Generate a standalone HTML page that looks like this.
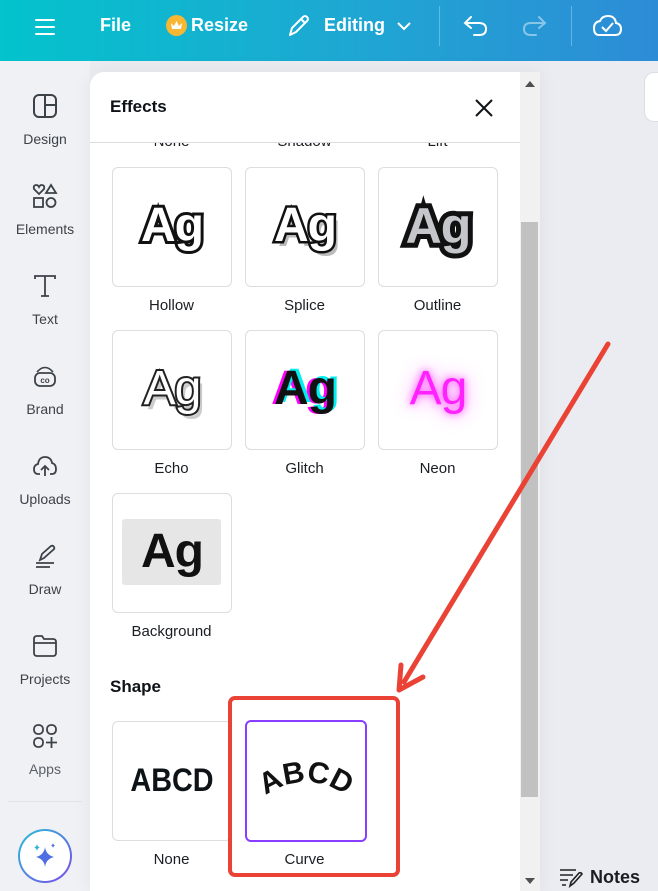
<!DOCTYPE html>
<html><head><meta charset="utf-8"><style>
*{margin:0;padding:0;box-sizing:border-box}
body{width:658px;height:891px;overflow:hidden;background:#ebecf1;font-family:"Liberation Sans",sans-serif;position:relative;color:#0e1318}
.top{position:absolute;left:0;top:0;width:658px;height:61px;background:linear-gradient(90deg,#03c3cc,#1fa6d3 55%,#2d8cd6)}
.tw{position:absolute;color:#fff;font-weight:bold;font-size:18px;top:15px}
.side{position:absolute;left:0;top:61px;width:90px;height:830px;background:#f0f1f5}
.si{position:absolute;left:0;width:90px;text-align:center;font-size:14px;color:#3c4249}
.si svg{display:block;margin:0 auto 12px}
.panel{position:absolute;left:90px;top:72px;width:450px;height:819px;background:#fff;border-radius:14px 0 0 0;overflow:hidden;box-shadow:0 0 20px rgba(0,0,0,.06)}
.card{position:absolute;width:120px;height:120px;border:1.5px solid #dcdde1;border-radius:6px;background:#fff;overflow:hidden}
.lab{position:absolute;width:133px;text-align:center;font-size:15px;color:#1a1d22}
.ag{position:absolute;left:0;top:0;width:100%;height:100%;text-align:center;line-height:116px;font-size:48px;font-family:"Liberation Sans",sans-serif;font-weight:bold;letter-spacing:-1px}
</style></head><body>
<div class="top">
 <svg style="position:absolute;left:34px;top:17px" width="22" height="20"><path d="M2 3H20M2 10H20M2 17H20" stroke="#fff" stroke-width="2" stroke-linecap="round"/></svg>
 <div class="tw" style="left:100px">File</div>
 <div style="position:absolute;left:166px;top:15px;width:21px;height:21px;border-radius:50%;background:#f7b733"></div>
 <svg style="position:absolute;left:169px;top:19px" width="15" height="13"><path d="M2 4L5 7L7.5 2L10 7L13 4L12 10H3Z" fill="#fff"/></svg>
 <div class="tw" style="left:191px">Resize</div>
 <svg style="position:absolute;left:286px;top:13px" width="26" height="26"><path d="M4 22L6 15L17 4Q19 2 21 4Q23 6 21 8L10 19Z M15 6L19 10" stroke="#fff" stroke-width="2" fill="none" stroke-linejoin="round"/></svg>
 <div class="tw" style="left:324px">Editing</div>
 <svg style="position:absolute;left:396px;top:20px" width="16" height="12"><path d="M2 3L8 9L14 3" stroke="#fff" stroke-width="2" fill="none"/></svg>
 <div style="position:absolute;left:439px;top:6px;width:1px;height:40px;background:rgba(255,255,255,.3)"></div>
 <svg style="position:absolute;left:462px;top:14px" width="28" height="24"><path d="M9 3L3 9L9 14M3 9H17Q24 9 24 15Q24 21 17 21H12" stroke="#fff" stroke-width="2" fill="none" stroke-linecap="round"/></svg>
 <svg style="position:absolute;left:520px;top:14px" width="28" height="24" opacity=".45"><path d="M19 3L25 9L19 14M25 9H11Q4 9 4 15Q4 21 11 21H16" stroke="#fff" stroke-width="2" fill="none" stroke-linecap="round"/></svg>
 <div style="position:absolute;left:571px;top:6px;width:1px;height:40px;background:rgba(255,255,255,.3)"></div>
 <svg style="position:absolute;left:590px;top:12px" width="34" height="26"><path d="M9 23H25Q31 23 31 17Q31 12 26 11Q25 4 18 4Q12 4 10 9Q4 10 4 16Q4 23 9 23Z" stroke="#fff" stroke-width="2" fill="none"/><path d="M12 15L16 19L23 11" stroke="#fff" stroke-width="2" fill="none"/></svg>
</div>
<div class="side">
 <div class="si" style="top:32px"><svg width="26" height="26"><rect x="2" y="2" width="22" height="22" rx="5" stroke="#3c4249" stroke-width="2" fill="none"/><path d="M13 2V24M13 12H24" stroke="#3c4249" stroke-width="2"/></svg>Design</div>
 <div class="si" style="top:122px"><svg width="26" height="26"><path d="M7 11L2 6Q1 2 4.5 2Q6 2 7 4Q8 2 9.5 2Q13 2 12 6Z" stroke="#3c4249" stroke-width="1.8" fill="none"/><path d="M19 2L24 10H14Z" stroke="#3c4249" stroke-width="1.8" fill="none"/><rect x="2" y="15" width="9" height="9" stroke="#3c4249" stroke-width="1.8" fill="none"/><circle cx="19" cy="19.5" r="4.5" stroke="#3c4249" stroke-width="1.8" fill="none"/></svg>Elements</div>
 <div class="si" style="top:212px"><svg width="26" height="26"><path d="M3 6V3H23V6M13 3V23M9 23H17" stroke="#3c4249" stroke-width="1.8" fill="none"/></svg>Text</div>
 <div class="si" style="top:302px"><svg width="26" height="26"><rect x="3" y="10" width="20" height="13" rx="5" stroke="#3c4249" stroke-width="1.8" fill="none"/><path d="M5 9Q13 0 21 9M8 6Q13 3 18 6" stroke="#3c4249" stroke-width="1.6" fill="none"/><text x="13" y="20" font-size="8" font-weight="bold" text-anchor="middle" fill="#3c4249" font-family="Liberation Sans">co</text></svg>Brand</div>
 <div class="si" style="top:392px"><svg width="26" height="26"><path d="M8 21H6Q2 21 2 16Q2 12 6 11Q7 4 13 4Q19 4 20 10Q24 11 24 16Q24 21 20 21H18" stroke="#3c4249" stroke-width="1.8" fill="none"/><path d="M13 23V13M9 17L13 13L17 17" stroke="#3c4249" stroke-width="1.8" fill="none"/></svg>Uploads</div>
 <div class="si" style="top:482px"><svg width="26" height="26"><path d="M8 17L10 11L19 3Q21 2 22 4Q23 6 21 7L12 15Z" stroke="#3c4249" stroke-width="1.8" fill="none"/><path d="M4 20H22M4 24H18" stroke="#3c4249" stroke-width="1.8"/></svg>Draw</div>
 <div class="si" style="top:572px"><svg width="26" height="26"><path d="M2 6Q2 3 5 3H10L12 6H21Q24 6 24 9V20Q24 23 21 23H5Q2 23 2 20Z M2 10H24" stroke="#3c4249" stroke-width="1.8" fill="none"/></svg>Projects</div>
 <div class="si" style="top:662px;color:#5a6068"><svg width="26" height="26"><rect x="2" y="2" width="9" height="9" rx="4" stroke="#3c4249" stroke-width="1.8" fill="none"/><rect x="15" y="2" width="9" height="9" rx="4" stroke="#3c4249" stroke-width="1.8" fill="none"/><rect x="2" y="15" width="9" height="9" rx="4" stroke="#3c4249" stroke-width="1.8" fill="none"/><path d="M19.5 14V25M14 19.5H25" stroke="#3c4249" stroke-width="1.8"/></svg>Apps</div>
 <div style="position:absolute;left:8px;top:740px;width:74px;height:1px;background:#e2e3e8"></div>
 <div style="position:absolute;left:18px;top:768px;width:54px;height:54px;border-radius:50%;background:linear-gradient(135deg,#27c0d8,#7d4ae8);padding:2px"><div style="width:100%;height:100%;border-radius:50%;background:#fff"></div></div>
 <svg style="position:absolute;left:30px;top:780px" width="30" height="30"><path d="M15 6Q16 14 24 16Q16 18 15 26Q14 18 6 16Q14 14 15 6Z" fill="#4f6fe0"/><path d="M7 3Q7.5 6 10 6.5Q7.5 7 7 10Q6.5 7 4 6.5Q6.5 6 7 3Z" fill="#2bb3db"/><path d="M23 2Q23.4 4 25 4.5Q23.4 5 23 7Q22.6 5 21 4.5Q22.6 4 23 2Z" fill="#4f6fe0"/></svg>
</div>
<div style="position:absolute;left:644px;top:72px;width:30px;height:50px;background:#fff;border-radius:10px;border:1px solid #dcdde1"></div>
<div class="panel">
 <div style="position:absolute;left:20px;top:25px;font-weight:bold;font-size:17px">Effects</div>
 <svg style="position:absolute;left:384px;top:26px" width="20" height="20"><path d="M2 2L18 18M18 2L2 18" stroke="#0e1318" stroke-width="2"/></svg>
 <div style="position:absolute;left:0;top:70px;width:430px;height:1px;background:#dcdde1;z-index:2"></div>
 <div style="position:absolute;left:0;top:71px;width:430px;height:760px;overflow:hidden">
  <div class="lab" style="left:15px;top:-10px">None</div><div class="lab" style="left:148px;top:-10px">Shadow</div><div class="lab" style="left:281px;top:-10px">Lift</div>
  <div class="card" style="left:22px;top:24px"><div class="ag" style="color:#fff;-webkit-text-stroke:6px #111;paint-order:stroke fill">Ag</div></div>
  <div class="card" style="left:155px;top:24px"><div class="ag" style="color:#bbb;left:4px;top:5px">Ag</div><div class="ag" style="color:#fff;-webkit-text-stroke:5px #111;paint-order:stroke fill">Ag</div></div>
  <div class="card" style="left:288px;top:24px"><div class="ag" style="font-size:50px;color:#c4c6c9;-webkit-text-stroke:10px #111;paint-order:stroke fill">Ag</div></div>
  <div class="lab" style="left:15px;top:154px">Hollow</div><div class="lab" style="left:148px;top:154px">Splice</div><div class="lab" style="left:281px;top:154px">Outline</div>
  <div class="card" style="left:22px;top:187px"><div class="ag" style="font-weight:normal;color:#ccc;left:4px;top:5px">Ag</div><div class="ag" style="font-weight:normal;color:#fff;-webkit-text-stroke:4px #222;paint-order:stroke fill">Ag</div></div>
  <div class="card" style="left:155px;top:187px"><div class="ag" style="color:#f0f;left:-3px">Ag</div><div class="ag" style="color:#0ee;left:3px;top:-2px">Ag</div><div class="ag" style="color:#111">Ag</div></div>
  <div class="card" style="left:288px;top:187px"><div class="ag" style="font-weight:normal;color:#f2f;text-shadow:0 0 8px #f4f,0 0 20px #f8f">Ag</div></div>
  <div class="lab" style="left:15px;top:317px">Echo</div><div class="lab" style="left:148px;top:317px">Glitch</div><div class="lab" style="left:281px;top:317px">Neon</div>
  <div class="card" style="left:22px;top:350px"><div style="position:absolute;left:9px;top:25px;width:99px;height:66px;background:#e6e6e6;border-radius:3px"></div><div class="ag" style="color:#111">Ag</div></div>
  <div class="lab" style="left:15px;top:480px">Background</div>
  <div style="position:absolute;left:20px;top:534px;font-weight:bold;font-size:17px">Shape</div>
  <div class="card" style="left:22px;top:578px"><div class="ag" style="font-size:32px;letter-spacing:0;transform:scaleX(.9)">ABCD</div></div>
  <div class="card" style="left:155px;top:577px;width:122px;height:122px;border:2px solid #8b3dff"><svg width="118" height="118" style="position:absolute;left:0;top:0"><path id="cv" d="M10 80Q59 40 108 80" fill="none"/><text font-family="Liberation Sans" font-weight="bold" font-size="30" fill="#111"><textPath href="#cv" startOffset="50%" text-anchor="middle">ABCD</textPath></text></svg></div>
  <div class="lab" style="left:15px;top:708px">None</div><div class="lab" style="left:148px;top:708px">Curve</div>
 </div>
 <div style="position:absolute;left:430px;top:0;width:20px;height:819px;background:#f1f1f1"></div>
 <div style="position:absolute;left:431px;top:150px;width:17px;height:575px;background:#c1c1c1"></div>
 <div style="position:absolute;left:435px;top:9px;border:5px solid transparent;border-bottom:6px solid #505050;border-top:0"></div>
 <div style="position:absolute;left:435px;top:806px;border:5px solid transparent;border-top:6px solid #505050;border-bottom:0"></div>
</div>
<div style="position:absolute;left:228px;top:696px;width:172px;height:181px;border:4px solid #ea4335;border-radius:7px"></div>
<svg style="position:absolute;left:0;top:0" width="658" height="891"><path d="M608 344L404 682" stroke="#ea4335" stroke-width="5" stroke-linecap="round"/><path d="M399 690L401 665M399 690L423 677" stroke="#ea4335" stroke-width="5" stroke-linecap="round"/></svg>
<svg style="position:absolute;left:558px;top:867px" width="26" height="22"><path d="M2 3H18M2 8H15M2 13H10M4 18H8" stroke="#222" stroke-width="1.6"/><path d="M12 19L13 15L21 6Q23 5 24 7L16 16Z" stroke="#222" stroke-width="1.6" fill="none"/></svg>
<div style="position:absolute;left:590px;top:867px;font-size:18px;font-weight:bold;color:#1a1d22">Notes</div>
</body></html>
